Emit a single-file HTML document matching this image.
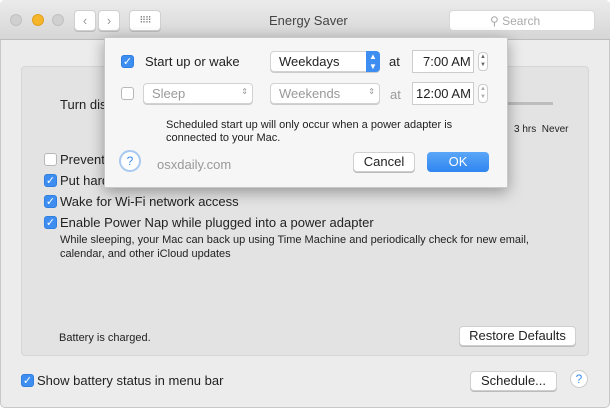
<!DOCTYPE html>
<html><head><style>
*{box-sizing:border-box;margin:0;padding:0}
body{width:610px;height:408px;overflow:hidden;background:#fff;font-family:"Liberation Sans",sans-serif;color:#222;position:relative}
.a{position:absolute}
.win{left:0;top:0;width:610px;height:408px;background:#ececec;border:1px solid #c8c8c8;border-radius:5px}
.tb{left:0;top:0;width:610px;height:40px;background:linear-gradient(#ebebeb,#d6d6d6);border-bottom:1px solid #bdbdbd;border-radius:5px 5px 0 0}
.dot{width:12px;height:12px;border-radius:50%;top:14px;background:#d0d0d0;border:1px solid #c0c0c0}
.btn{background:#fff;border:1px solid #d0d0d0;border-radius:4px;box-shadow:0 1px 0 #bbb;font-size:13px;text-align:center}
.panel{left:21px;top:66px;width:568px;height:290px;background:#e3e3e3;border:1px solid #d6d6d6;border-radius:4px}
.cb{width:13px;height:13px;border-radius:3px;background:#fff;border:1px solid #b8b8b8}
.cb.on{background:#3d8ef0;border-color:#2f7fe0;color:#fff;font-size:11px;line-height:12px;text-align:center}
.t{font-size:13px;white-space:nowrap}
.dlg{left:104px;top:37px;width:404px;height:151px;background:#f6f6f6;box-shadow:0 4px 14px rgba(0,0,0,.35);border:1px solid #c9c9c9}
.pop{background:#fff;border:1px solid #d2d2d2;border-radius:4px;font-size:13px;padding:2px 0 0 8px;box-shadow:0 1px 0 #ccc}
</style></head><body>
<div class="a win"></div>
<div class="a tb"></div>
<div class="a dot" style="left:10px"></div>
<div class="a dot" style="left:32px;background:#f5b62c;border-color:#e0a020"></div>
<div class="a dot" style="left:52px"></div>
<div class="a btn" style="left:74px;top:10px;width:22px;height:21px;color:#999;line-height:19px">&#x2039;</div>
<div class="a btn" style="left:98px;top:10px;width:22px;height:21px;color:#999;line-height:19px">&#x203A;</div>
<div class="a btn" style="left:129px;top:10px;width:32px;height:21px;font-size:9px;line-height:19px;color:#777;letter-spacing:-1px">⠿⠿</div>
<div class="a t" style="left:269px;top:13px;color:#444">Energy Saver</div>
<div class="a" style="left:449px;top:10px;width:146px;height:21px;background:#fff;border:1px solid #d8d8d8;border-radius:4px;color:#aaa;font-size:12px;padding:3px 0 0 40px">&#9906; Search</div>

<div class="a panel"></div>
<div class="a t" style="left:60px;top:97px">Turn dis</div>
<div class="a" style="left:505px;top:102px;width:48px;height:3px;background:#bdbdbd"></div>
<div class="a" style="left:514px;top:124px;font-size:10px">3 hrs &nbsp;Never</div>

<div class="a cb" style="left:44px;top:153px"></div><div class="a t" style="left:60px;top:152px">Prevent</div>
<div class="a cb on" style="left:44px;top:174px">✓</div><div class="a t" style="left:60px;top:173px">Put hard</div>
<div class="a cb on" style="left:44px;top:195px">✓</div><div class="a t" style="left:60px;top:194px">Wake for Wi-Fi network access</div>
<div class="a cb on" style="left:44px;top:216px">✓</div><div class="a t" style="left:60px;top:215px">Enable Power Nap while plugged into a power adapter</div>
<div class="a" style="left:60px;top:233px;font-size:11px;line-height:14px">While sleeping, your Mac can back up using Time Machine and periodically check for new email,<br>calendar, and other iCloud updates</div>
<div class="a" style="left:59px;top:332px;font-size:11px">Battery is charged.</div>
<div class="a btn" style="left:459px;top:326px;width:117px;height:20px;line-height:18px">Restore Defaults</div>

<div class="a cb on" style="left:21px;top:374px">✓</div><div class="a t" style="left:37px;top:373px">Show battery status in menu bar</div>
<div class="a btn" style="left:470px;top:371px;width:87px;height:20px;line-height:18px">Schedule...</div>
<div class="a" style="left:570px;top:370px;width:18px;height:18px;border-radius:50%;background:#fff;border:1px solid #ccc;color:#3d8ef0;font-size:12px;text-align:center;line-height:16px">?</div>

<div class="a dlg"></div>
<div class="a cb on" style="left:121px;top:55px">✓</div>
<div class="a t" style="left:145px;top:54px">Start up or wake</div>
<div class="a pop" style="left:270px;top:51px;width:110px;height:21px">Weekdays</div>
<div class="a" style="left:366px;top:51px;width:14px;height:21px;background:#3d8ef0;border-radius:0 4px 4px 0;color:#fff;font-size:8px;text-align:center;line-height:10px;padding-top:1px">▲<br>▼</div>
<div class="a t" style="left:389px;top:54px">at</div>
<div class="a" style="left:412px;top:50px;width:62px;height:23px;background:#fff;border:1px solid #ccc;font-size:13px;padding:3px 0 0 10px">7:00 AM</div>
<div class="a" style="left:478px;top:52px;width:10px;height:19px;border:1px solid #ccc;border-radius:4px;background:#fff;font-size:6px;line-height:8px;text-align:center;color:#666">▲<br>▼</div>

<div class="a cb" style="left:121px;top:87px"></div>
<div class="a pop" style="left:143px;top:83px;width:110px;height:21px;color:#999">Sleep<span style="position:absolute;right:4px;top:3px;font-size:8px">⇕</span></div>
<div class="a pop" style="left:270px;top:83px;width:110px;height:21px;color:#999">Weekends<span style="position:absolute;right:4px;top:3px;font-size:8px">⇕</span></div>
<div class="a t" style="left:390px;top:87px;color:#999">at</div>
<div class="a" style="left:412px;top:82px;width:62px;height:23px;background:#fff;border:1px solid #ccc;font-size:13px;padding:3px 0 0 3px">12:00 AM</div>
<div class="a" style="left:478px;top:84px;width:10px;height:19px;border:1px solid #ccc;border-radius:4px;background:#fff;font-size:6px;line-height:8px;text-align:center;color:#aaa">▲<br>▼</div>

<div class="a" style="left:166px;top:119px;font-size:11px;line-height:13px">Scheduled start up will only occur when a power adapter is<br>connected to your Mac.</div>
<div class="a" style="left:119px;top:150px;width:22px;height:22px;border-radius:50%;background:#fff;border:2px solid #a9c9f0;color:#3d8ef0;font-size:12px;text-align:center;line-height:18px">?</div>
<div class="a" style="left:157px;top:157px;font-size:13px;color:#999">osxdaily.com</div>
<div class="a btn" style="left:353px;top:152px;width:62px;height:20px;line-height:18px">Cancel</div>
<div class="a" style="left:427px;top:152px;width:62px;height:20px;border-radius:4px;background:linear-gradient(#5aa6f8,#2f86f0);color:#fff;font-size:13px;text-align:center;line-height:20px">OK</div>
</body></html>
